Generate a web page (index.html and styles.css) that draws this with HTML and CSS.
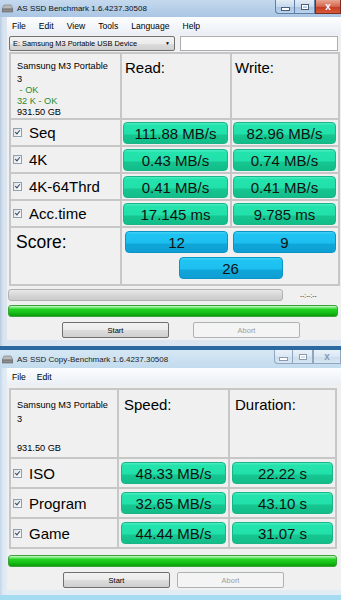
FILE: index.html
```html
<!DOCTYPE html>
<html lang="en">
<head>
  <meta charset="UTF-8">
  <meta name="viewport" content="width=device-width, initial-scale=1.0">
  <title>AS SSD Benchmark</title>
  <link rel="stylesheet" href="styles.css">
</head>
<body>
  <!-- Main benchmark window -->
  <div class="win active">
    <div class="titlebar">
      <svg class="app-icon" width="11" height="9" viewBox="0 0 11 9">
        <path d="M2 1 L9 1 L11 5 L0 5 Z" fill="#b9b9b9" stroke="#7a7a7a" stroke-width="0.6"/>
        <rect x="0" y="5" width="11" height="3" fill="#8c8c8c" stroke="#5f5f5f" stroke-width="0.6"/>
      </svg>
      <span class="title">AS SSD Benchmark 1.6.4237.30508</span>
      <div class="caption">
        <span class="cb min"><i></i></span>
        <span class="cb max"><i></i></span>
        <span class="cb close">x</span>
      </div>
    </div>
    <div class="frame">
      <div class="client">
        <div class="menubar">
          <span>File</span><span>Edit</span><span>View</span><span>Tools</span><span>Language</span><span>Help</span>
        </div>
        <div class="toolbar">
          <div class="combo">E: Samsung M3 Portable USB Device <span class="arrow">&#9660;</span></div>
          <div class="textbox"></div>
        </div>

        <div class="panel bench">
          <div class="cell info">
            <div class="name">Samsung M3 Portable</div>
            <div>3</div>
            <div class="ok">&nbsp;- OK</div>
            <div class="ok">32 K - OK</div>
            <div>931.50 GB</div>
          </div>
          <div class="cell head">Read:</div>
          <div class="cell head">Write:</div>

          <div class="cell label"><span class="check"></span>Seq</div>
          <div class="cell val"><div class="bar">111.88 MB/s</div></div>
          <div class="cell val"><div class="bar">82.96 MB/s</div></div>

          <div class="cell label"><span class="check"></span>4K</div>
          <div class="cell val"><div class="bar">0.43 MB/s</div></div>
          <div class="cell val"><div class="bar">0.74 MB/s</div></div>

          <div class="cell label"><span class="check"></span>4K-64Thrd</div>
          <div class="cell val"><div class="bar">0.41 MB/s</div></div>
          <div class="cell val"><div class="bar">0.41 MB/s</div></div>

          <div class="cell label"><span class="check"></span>Acc.time</div>
          <div class="cell val"><div class="bar">17.145 ms</div></div>
          <div class="cell val"><div class="bar">9.785 ms</div></div>

          <div class="cell score-label">Score:</div>
          <div class="cell score">
            <div class="bar blue">12</div>
            <div class="bar blue">9</div>
            <div class="bar blue total">26</div>
          </div>
        </div>

        <div class="progress-row">
          <div class="progress gray"></div>
          <span class="time">--:--:--</span>
        </div>
        <div class="progress green"></div>
        <div class="buttons">
          <button class="btn">Start</button>
          <button class="btn" disabled>Abort</button>
        </div>
      </div>
    </div>
  </div>

  <!-- Copy benchmark window -->
  <div class="win inactive">
    <div class="titlebar">
      <svg class="app-icon" width="11" height="9" viewBox="0 0 11 9">
        <path d="M2 1 L9 1 L11 5 L0 5 Z" fill="#b9b9b9" stroke="#7a7a7a" stroke-width="0.6"/>
        <rect x="0" y="5" width="11" height="3" fill="#8c8c8c" stroke="#5f5f5f" stroke-width="0.6"/>
      </svg>
      <span class="title">AS SSD Copy-Benchmark 1.6.4237.30508</span>
      <div class="caption">
        <span class="cb min"><i></i></span>
        <span class="cb max"><i></i></span>
        <span class="cb close">x</span>
      </div>
    </div>
    <div class="frame">
      <div class="client">
        <div class="menubar">
          <span>File</span><span>Edit</span>
        </div>

        <div class="panel copy">
          <div class="cell info">
            <div class="name">Samsung M3 Portable</div>
            <div>3</div>
            <div class="size">931.50 GB</div>
          </div>
          <div class="cell head">Speed:</div>
          <div class="cell head">Duration:</div>

          <div class="cell label"><span class="check"></span>ISO</div>
          <div class="cell val"><div class="bar">48.33 MB/s</div></div>
          <div class="cell val"><div class="bar">22.22 s</div></div>

          <div class="cell label"><span class="check"></span>Program</div>
          <div class="cell val"><div class="bar">32.65 MB/s</div></div>
          <div class="cell val"><div class="bar">43.10 s</div></div>

          <div class="cell label"><span class="check"></span>Game</div>
          <div class="cell val"><div class="bar">44.44 MB/s</div></div>
          <div class="cell val"><div class="bar">31.07 s</div></div>
        </div>

        <div class="progress green wide"></div>
        <div class="buttons tight">
          <button class="btn">Start</button>
          <button class="btn" disabled>Abort</button>
        </div>
      </div>
    </div>
  </div>
</body>
</html>
```

FILE: styles.css
```css
body {
  margin: 0;
  padding: 0;
  width: 341px;
  height: 600px;
  overflow: hidden;
  font-family: "Liberation Sans", Arial, sans-serif;
  color: #000;
  background: linear-gradient(to bottom, #1f4d7d 0, #2b6aa0 350px, #86cbea 350px, #a6dcf2 600px);
}

.win {
  width: 341px;
}

.win.inactive {
  margin-top: 4px;
}

/* title bar */
.titlebar {
  height: 17px;
  display: flex;
  align-items: center;
  background: linear-gradient(to bottom, #c4d9ee, #aac6e4);
}

.inactive .titlebar {
  height: 18px;
  background: linear-gradient(to bottom, #d6e7f4, #c2dbee);
}

.app-icon {
  margin: 0 4px 0 2px;
}

.title {
  font-size: 8px;
  color: #111;
  white-space: nowrap;
}

.inactive .title {
  color: #222;
}

.caption {
  margin-left: auto;
  align-self: flex-start;
  display: flex;
  height: 14px;
}

.cb {
  display: flex;
  align-items: center;
  justify-content: center;
  height: 13px;
  border: 1px solid #5f7fa6;
  border-top: none;
  background: linear-gradient(to bottom, #e2ecf6 0, #c7d9ec 50%, #a9c4e2 51%, #bad3ec 100%);
}

.cb.min {
  width: 18px;
  border-radius: 0 0 0 4px;
  border-right: none;
}

.cb.min i {
  width: 7px;
  height: 2px;
  margin-top: 5px;
  background: #fff;
  border: 1px solid #4a5f78;
}

.cb.max {
  width: 19px;
}

.cb.max i {
  width: 6px;
  height: 4px;
  border: 1px solid #4a5f78;
  box-shadow: inset 0 0 0 1px #fff;
}

.cb.close {
  width: 24px;
  border-color: #7a2a20;
  background: linear-gradient(to bottom, #e8a493 0, #d4664e 50%, #c23a1f 51%, #d75a3a 100%);
  color: #fff;
  font-size: 10px;
  font-weight: bold;
  line-height: 1;
}

.inactive .cb {
  border-color: #8ea6c0;
  background: linear-gradient(to bottom, #eaf2f9 0, #d9e7f3 50%, #cbdcec 51%, #d8e6f3 100%);
}

.inactive .cb.min {
  width: 17px;
}

.inactive .cb.max {
  width: 19px;
}

.inactive .cb.close {
  width: 26px;
  color: #8a9bb0;
}

.inactive .cb i {
  border-color: #8a9bb0;
}

/* frame + client area */
.frame {
  padding: 0 0 6px 7px;
  background: linear-gradient(to right, #b7cbe0 0, #d7e3ef 3px, #dbe6f1 7px);
}

.inactive .frame {
  padding-bottom: 5px;
  background: linear-gradient(to right, #c2d6e8 0, #dde9f3 3px, #e2ecf5 7px);
}

.client {
  background: #f0f0f0;
  padding-bottom: 2px;
}

.menubar {
  height: 18px;
  display: flex;
  align-items: center;
  gap: 13px;
  padding-left: 5px;
  font-size: 8.6px;
  background: linear-gradient(to bottom, #fcfdfe, #eaeff5);
}

.inactive .menubar {
  height: 17px;
  gap: 11px;
}

.toolbar {
  display: flex;
  gap: 5px;
  height: 17px;
  padding: 1px 3px 0 2px;
  box-sizing: border-box;
}

.combo {
  width: 166px;
  height: 15px;
  box-sizing: border-box;
  border: 1px solid #707070;
  border-radius: 2px;
  background: linear-gradient(to bottom, #f2f2f2 0, #ebebeb 50%, #dddddd 51%, #cfcfcf 100%);
  font-size: 7.4px;
  line-height: 13px;
  padding-left: 3px;
  display: flex;
  white-space: nowrap;
}

.combo .arrow {
  margin-left: auto;
  margin-right: 4px;
  font-size: 5px;
}

.textbox {
  flex: 1;
  height: 15px;
  box-sizing: border-box;
  border: 1px solid #abadb3;
  background: #fff;
}

/* result tables */
.panel {
  display: grid;
  gap: 2px;
  padding: 2px;
  background: #c7c7c7;
  width: max-content;
}

.bench {
  grid-template-columns: 109px 108px 106px;
  grid-template-rows: 64px repeat(4, 25px) 56px;
  margin: 0 0 0 2px;
}

.copy {
  grid-template-columns: 106px 109px 105px;
  grid-template-rows: 67px repeat(3, 28px);
  margin: 3px 0 0 2px;
}

.cell {
  background: #f0f0f0;
}

.info {
  font-size: 9.2px;
  line-height: 11px;
  padding: 7px 0 0 6px;
}

.info .name {
  margin-bottom: 2px;
}

.copy .info {
  padding-top: 10px;
}

.copy .info .name {
  margin-bottom: 3px;
}

.copy .info .size {
  margin-top: 18px;
}

.ok {
  color: #2e8b2e;
}

.head {
  font-size: 15px;
  padding: 5px 0 0 3px;
}

.copy .head {
  padding: 6px 0 0 5px;
}

.label {
  display: flex;
  align-items: center;
  font-size: 15px;
  padding-left: 2px;
}

.check {
  width: 7px;
  height: 7px;
  margin-right: 7px;
  border: 1px solid #8f9fb2;
  background: linear-gradient(to bottom right, #dfe4ea, #fbfcfd);
  position: relative;
}

.check::after {
  content: "";
  position: absolute;
  left: 2px;
  top: 0;
  width: 2px;
  height: 4px;
  border: solid #3a4a5e;
  border-width: 0 1px 1px 0;
  transform: rotate(40deg);
}

.val {
  display: flex;
  align-items: center;
  padding: 0 2px;
}

.bench .val {
  padding: 0 2px 0 1px;
}

.bar {
  flex: 1;
  height: 22px;
  box-sizing: border-box;
  border-radius: 4px;
  border: 1px solid #1ab486;
  background: linear-gradient(to bottom, #4cefc4 0, #24e3ad 12%, #22e0aa 55%, #16c690 60%, #12bd89 100%);
  font-size: 15px;
  line-height: 22px;
  text-align: center;
  color: #111;
}

.score-label {
  font-size: 17.5px;
  padding: 4px 0 0 5px;
}

.score {
  grid-column: 2 / 4;
  display: grid;
  grid-template-columns: 1fr 1fr;
  column-gap: 5px;
  row-gap: 4px;
  align-content: start;
  padding: 3px 2px 0 3px;
}

.bar.blue {
  border-color: #0b95c6;
  background: linear-gradient(to bottom, #44d3f7 0, #20c4f2 12%, #1cbff0 55%, #10a6d9 60%, #0e9fd3 100%);
}

.bar.total {
  grid-column: 1 / 3;
  justify-self: center;
  width: 104px;
}

/* progress + buttons */
.progress-row {
  display: flex;
  align-items: center;
  margin-top: 3px;
  padding-left: 1px;
}

.progress {
  height: 12px;
  box-sizing: border-box;
  border-radius: 3px;
}

.progress.gray {
  width: 275px;
  border: 1px solid #b2b2b2;
  background: linear-gradient(to bottom, #e8e8e8, #d4d4d4 60%, #cbcbcb);
}

.time {
  margin-left: 17px;
  font-size: 6.5px;
  color: #333;
}

.progress.green {
  margin: 4px 3px 0 1px;
  border: 1px solid #3aa33a;
  background: linear-gradient(to bottom, #d4f7d4 0, #7de87d 15%, #22d322 35%, #16c016 65%, #0d9b0d 100%);
}

.progress.green.wide {
  margin: 6px 4px 0 1px;
}

.buttons {
  display: flex;
  gap: 24px;
  margin-top: 5px;
  padding-left: 55px;
}

.buttons.tight {
  gap: 7px;
  padding-left: 56px;
}

.btn {
  width: 107px;
  height: 16px;
  padding: 0;
  border: 1px solid #707070;
  border-radius: 2px;
  background: linear-gradient(to bottom, #f2f2f2 0, #ebebeb 50%, #dddddd 51%, #cfcfcf 100%);
  font-family: "Liberation Sans", Arial, sans-serif;
  font-size: 7.5px;
  color: #000;
}

.btn:disabled {
  border-color: #adb2b5;
  background: #f4f4f4;
  color: #a0a0a0;
}
```
